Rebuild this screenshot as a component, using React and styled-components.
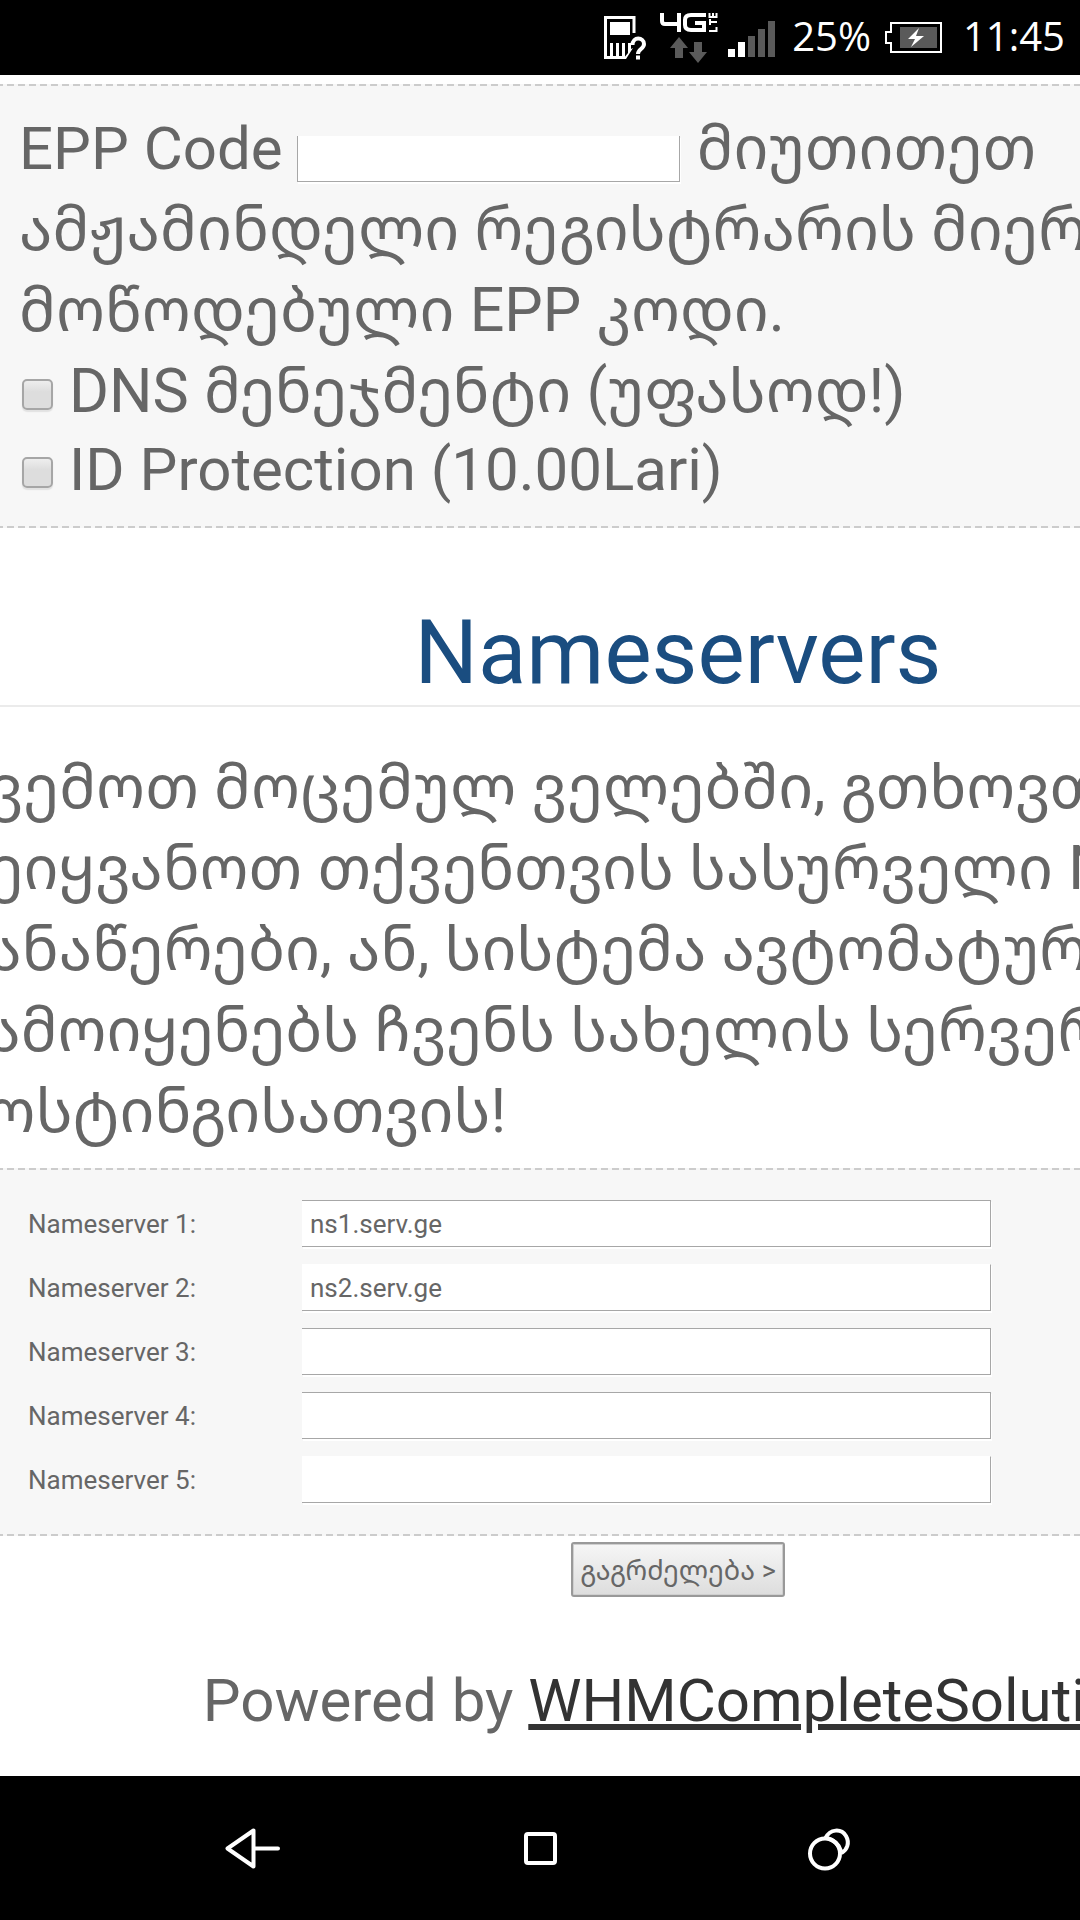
import React from 'react'
import styled, { createGlobalStyle } from 'styled-components'

const COLORS = {
    text: '#666666',
    heading: '#1a4d80',
    link: '#333333',
    panel: '#f7f7f7',
    dash: '#cccccc',
    line: '#ebebeb',
    field: '#a7a7a7',
    dim: '#5a5a5a',
}

const dashes = `repeating-linear-gradient(90deg, ${COLORS.dash} 0 7px, transparent 7px 11px)`

const GlobalStyle = createGlobalStyle`
    *{
        box-sizing:border-box;
    }
    body{
        margin:0;
        background:#fff;
        color:${COLORS.text};
        font-family:Roboto, "Noto Sans Georgian", "DejaVu Sans", sans-serif;
    }
`

const Screen = styled.div`
    display:flex;
    flex-direction:column;
    min-height:100vh;
`

/* status bar */

const StatusBar = styled.header`
    display:flex;
    align-items:center;
    justify-content:flex-end;
    height:75px;
    padding-right:15px;
    background:#000;
    color:#fff;
    font-family:"Open Sans", sans-serif;
    font-size:40px;
`

const StatusText = styled.span`
    height:75px;
    line-height:72px;
`

const StatusIcons = styled.svg`
    display:block;
    width:184px;
    height:75px;
    margin-right:6px;
`

const BatteryIcon = styled.svg`
    display:block;
    width:60px;
    height:75px;
    margin:0 19px 0 13px;
`

/* page */

const Viewport = styled.main`
    flex:1;
    overflow:hidden;
    padding-top:9px;
`

/* the page is wider than the window and scrolled a little to the right */
const Page = styled.form`
    width:calc(100% + 372px);
    margin:0 0 0 -48px;
    font-size:60px;
    line-height:81px;
    white-space:nowrap;
`

const Panel = styled.section`
    padding:${props => props.$pad};
    background:
        ${dashes} top / 100% 2px no-repeat,
        ${dashes} bottom / 100% 2px no-repeat,
        ${COLORS.panel};
`

const Georgian = styled.div`
    font-size:61px;
`

const EppLine = styled.div`
    display:flex;
    align-items:flex-end;
`

const EppInput = styled.input`
    width:383px;
    height:46px;
    margin:0 17px 7px 14px;
    padding:0 8px;
    border:1px solid ${COLORS.field};
    border-top:0;
    border-radius:0;
    background:#fff;
    box-shadow:1px 2px 0 #fff;
    color:${COLORS.text};
    font:26px Roboto, sans-serif;
    outline:none;
`

const CheckLine = styled.label`
    display:flex;
    align-items:center;
    height:78px;
    padding-top:3px;
`

const CheckBox = styled.input`
    appearance:none;
    width:31px;
    height:31px;
    margin:6px 16px 0 3px;
    border:2px solid #a6a6a6;
    border-radius:5px;
    background:linear-gradient(#eeeeee, #dddddd 40%, #dddddd);
    box-shadow:0 2px 1px #e2e2e2;
`

const Heading = styled.h1`
    margin:72px 0 0;
    border-bottom:2px solid ${COLORS.line};
    color:${COLORS.heading};
    font-weight:400;
    font-size:89px;
    line-height:105px;
    text-align:center;
`

const Intro = styled.p`
    margin:40px 0 16px;
    font-size:61px;
`

const Fields = styled.div`
    display:grid;
    grid-template-columns:274px 689px;
    row-gap:16px;
    font-size:26px;
    line-height:48px;
`

const FieldInput = styled.input`
    height:47px;
    padding:1px 8px 0;
    border:1px solid ${COLORS.field};
    border-left:0;
    border-top-color:${props => props.$open ? '#fff' : COLORS.field};
    border-radius:0;
    background:#fff;
    box-shadow:1px 2px 0 #fff;
    color:${COLORS.text};
    font:inherit;
    outline:none;
`

const SubmitRow = styled.div`
    display:flex;
    justify-content:center;
    padding-top:6px;
`

const SubmitButton = styled.button`
    height:55px;
    padding:0 7px;
    border:2px solid #999999;
    border-radius:3px;
    background:linear-gradient(#f6f6f6, #dddddd);
    box-shadow:inset 0 0 0 1px #cfcfcf;
    color:${COLORS.text};
    font-family:inherit;
    font-size:27px;
`

const Footer = styled.footer`
    margin-top:63px;
    text-align:center;
`

const FooterLink = styled.a`
    color:${COLORS.link};
    text-decoration:underline;
`

/* navigation bar */

const NavBar = styled.nav`
    display:flex;
    align-items:center;
    justify-content:center;
    gap:228px;
    height:144px;
    background:#000;
`

const NavButton = styled.button`
    width:60px;
    height:60px;
    padding:0;
    border:0;
    background:none;
    svg{
        display:block;
    }
`

const servers = [
    { id: 1, value: 'ns1.serv.ge' },
    { id: 2, value: 'ns2.serv.ge', open: true },
    { id: 3, value: '' },
    { id: 4, value: '' },
    { id: 5, value: '', open: true },
]

const Status = () => <StatusBar>
    <StatusIcons viewBox="602 0 184 75" fill="none" aria-hidden="true">
        {/* sim card */}
        <path d="M634 33V17.500H605.500V57.500H625" stroke="#fff" strokeWidth="3" />
        <path d="M610 22h20v13h-20zM610 43h3v14h-3zM616 43h3v14h-3zM622 43h3v14h-3zM628 43h3v6l2-1-7 11h-3l5-6z" fill="#fff" />
        <path d="M632.500 45c0-9 11.500-8 11.500-1 0 5-6 5-6 10M638 55.500v4" stroke="#fff" strokeWidth="4" />
        {/* 4G LTE */}
        <path d="M662 13v8q0 3 3 3h15M679 13v19M706 15h-15q-6 0-6 5v5q0 5 6 5h13v-7h-9" stroke="#fff" strokeWidth="4" />
        <path d="M709 31h7.500v-4M710 19v6M710 22h7M709.500 13v4h7v-4M713 17v-4" stroke="#fff" strokeWidth="2" />
        <path d="M679 37l9 11h-5v10h-8V48h-5zM698 63l-9-11h5V42h8v10h5z" fill={COLORS.dim} />
        {/* signal */}
        <path d="M728 49h7v8h-7zM738 42h7v15h-7z" fill="#fff" />
        <path d="M748 36h7v21h-7zM758 29h7v28h-7zM768 21h7v36h-7z" fill={COLORS.dim} />
    </StatusIcons>
    <StatusText>25%</StatusText>
    <BatteryIcon viewBox="884 0 60 75" fill="none" aria-hidden="true">
        <path d="M891 23h50v29h-50v-9h-5V32h5z" stroke="#fff" strokeWidth="2" />
        <path d="M900 27h37v21h-37z" fill={COLORS.dim} />
        <path d="M919 28l-11 11h7l-4 8 13-11h-8z" fill="#fff" />
    </BatteryIcon>
    <StatusText>11:45</StatusText>
</StatusBar>

const App = () => {
    return <Screen>
        <GlobalStyle />
        <Status />
        <Viewport>
            <Page>
                <Panel $pad="24px 0 21px 67px">
                    <EppLine>
                        <label htmlFor="epp">EPP Code</label>
                        <EppInput id="epp" type="text" />
                        <Georgian>მიუთითეთ</Georgian>
                    </EppLine>
                    <Georgian>ამჟამინდელი რეგისტრარის მიერ</Georgian>
                    <Georgian>მოწოდებული EPP კოდი.</Georgian>
                    <CheckLine>
                        <CheckBox type="checkbox" />
                        <Georgian>DNS მენეჯმენტი (უფასოდ!)</Georgian>
                    </CheckLine>
                    <CheckLine>
                        <CheckBox type="checkbox" />
                        ID Protection (10.00Lari)
                    </CheckLine>
                </Panel>
                <Heading>Nameservers</Heading>
                <Intro>
                    ქვემოთ მოცემულ ველებში, გთხოვთ<br />
                    შეიყვანოთ თქვენთვის სასურველი NS<br />
                    ჩანაწერები, ან, სისტემა ავტომატურად<br />
                    გამოიყენებს ჩვენს სახელის სერვერებს<br />
                    ჰოსტინგისათვის!
                </Intro>
                <Panel $pad="32px 0 32px 76px">
                    <Fields>
                        {servers.map(({ id, value, open }) => <React.Fragment key={id}>
                            <label htmlFor={`ns${id}`}>Nameserver {id}:</label>
                            <FieldInput id={`ns${id}`} type="text" defaultValue={value} $open={open} />
                        </React.Fragment>)}
                    </Fields>
                </Panel>
                <SubmitRow>
                    <SubmitButton type="button">გაგრძელება &gt;</SubmitButton>
                </SubmitRow>
                <Footer>
                    Powered by <FooterLink href="#whmcs">WHMCompleteSolution</FooterLink>
                </Footer>
            </Page>
        </Viewport>
        <NavBar>
            <NavButton aria-label="Back">
                <svg width="60" height="60" viewBox="222 1818 60 60" fill="none" stroke="#fff" strokeWidth="4" strokeLinecap="round" strokeLinejoin="round">
                    <path d="M227.500 1848.500L253.500 1830.500V1866.500ZM253.500 1848.500H278" />
                </svg>
            </NavButton>
            <NavButton aria-label="Home">
                <svg width="60" height="60" viewBox="510 1818 60 60" fill="none" stroke="#fff" strokeWidth="4">
                    <rect x="526" y="1834" width="29" height="29" rx="2" />
                </svg>
            </NavButton>
            <NavButton aria-label="Recent apps">
                <svg width="60" height="60" viewBox="798 1818 60 60" fill="none" stroke="#fff" strokeWidth="4">
                    <circle cx="825" cy="1853.500" r="15" />
                    <path d="M825.500 1838C830 1829 841 1828 846 1836C850 1843 847 1850 841.500 1853" />
                    <path d="M827 1838Q838 1841 841 1851" />
                </svg>
            </NavButton>
        </NavBar>
    </Screen>
}

export default App
